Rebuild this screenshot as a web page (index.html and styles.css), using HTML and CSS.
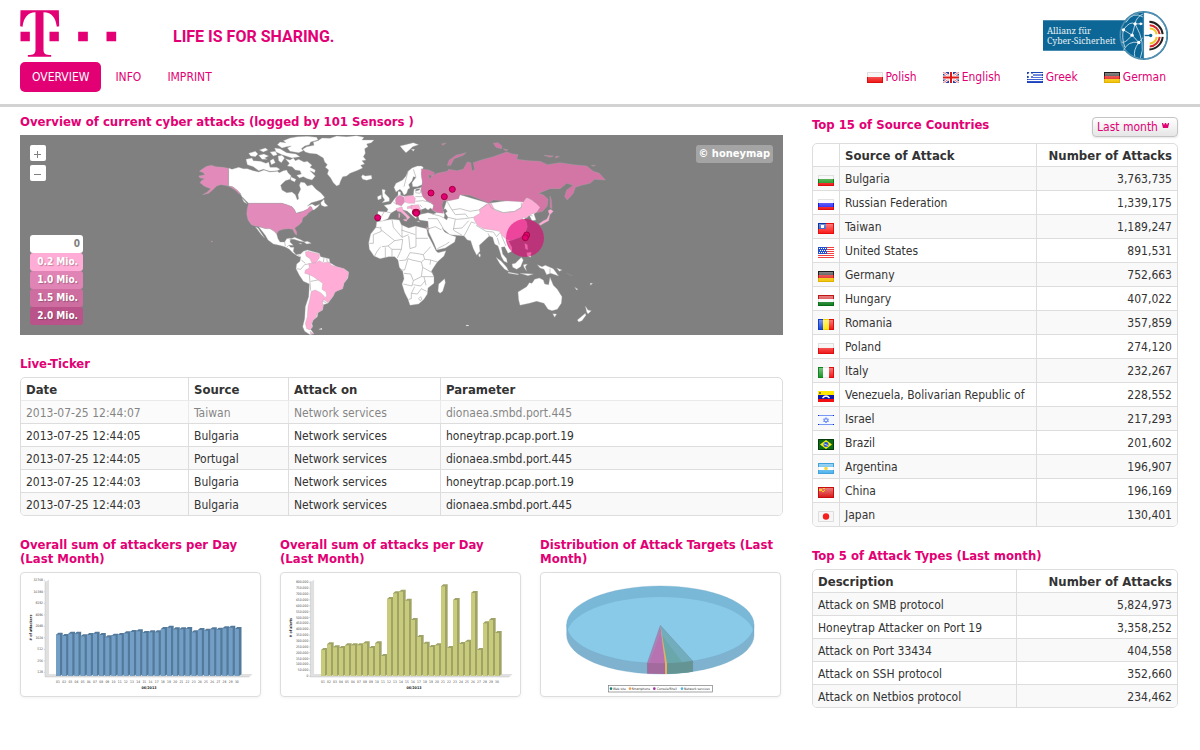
FILE: index.html
```html
<!DOCTYPE html>
<html lang="en">
<head>
<meta charset="utf-8">
<title>Overview of current cyber attacks</title>
<link rel="stylesheet" href="styles.css">
</head>
<body>
<svg class="defs" aria-hidden="true">
  <defs>
    <linearGradient id="gloss" x1="0" y1="0" x2="0" y2="1">
      <stop offset="0" stop-color="#fff" stop-opacity=".45"/><stop offset="1" stop-color="#fff" stop-opacity=".05"/>
    </linearGradient>
    <g id="shine"><rect x="1" y="1" width="14" height="9" fill="url(#gloss)"/><rect x=".5" y=".5" width="15" height="10" fill="none" stroke="#000" stroke-opacity=".08"/></g>
    <symbol id="pl" viewBox="0 0 16 11"><path fill="#f4f0f0" d="M0 0h16v6H0z"/><path fill="#f01010" d="M0 5h16v6H0z"/><use href="#shine"/></symbol>
    <symbol id="gb" viewBox="0 0 16 11"><path fill="#2a3f9c" d="M0 0h16v11H0z"/><path stroke="#fff" stroke-width="2.4" d="M0 0l16 11M16 0L0 11"/><path stroke="#e33" stroke-width=".7" d="M0 0l16 11M16 0L0 11"/><path fill="#fff" d="M6 0h4v11H6zM0 3.500h16v4H0z"/><path fill="#e01818" d="M7 0h2v11H7zM0 4.500h16v2H0z"/></symbol>
    <symbol id="gr" viewBox="0 0 16 11"><path fill="#fff" d="M0 0h16v11H0z"/><path fill="#2048c8" d="M0 0h16v1H0zM0 2h16v2H0zM0 5h16v1H0zM0 7h16v1H0zM0 9h16v2H0zM0 0h6v6H0z"/><path fill="#fff" d="M2 0h2v6H2zM0 2h6v2H0zM6 4h10v1H6z"/><use href="#shine"/></symbol>
    <symbol id="de" viewBox="0 0 16 11"><path fill="#222" d="M0 0h16v4H0z"/><path fill="#e01010" d="M0 4h16v3H0z"/><path fill="#f2c200" d="M0 7h16v4H0z"/><use href="#shine"/></symbol>
    <symbol id="bg" viewBox="0 0 16 11"><path fill="#f4f4f4" d="M0 0h16v4H0z"/><path fill="#129012" d="M0 4h16v4H0z"/><path fill="#f01010" d="M0 8h16v3H0z"/><use href="#shine"/></symbol>
    <symbol id="ru" viewBox="0 0 16 11"><path fill="#f6f6f6" d="M0 0h16v4H0z"/><path fill="#1818f0" d="M0 4h16v4H0z"/><path fill="#f01010" d="M0 8h16v3H0z"/><use href="#shine"/></symbol>
    <symbol id="tw" viewBox="0 0 16 11"><path fill="#fa1010" d="M0 0h16v11H0z"/><path fill="#1038b8" d="M0 0h8v6H0z"/><path fill="#fff" d="M3 2h3v3H3z"/><use href="#shine"/></symbol>
    <symbol id="us" viewBox="0 0 16 11"><path fill="#fff" d="M0 0h16v11H0z"/><path fill="#f04040" d="M0 0h16v1H0zM0 2h16v1H0zM0 4h16v1H0zM0 6h16v1H0zM0 8h16v1H0zM0 10h16v1H0z"/><path fill="#2450d0" d="M0 0h9v7H0z"/><path stroke="#fff" stroke-dasharray="1 1" d="M1 1.500h8M2 3.500h7M1 5.500h8"/></symbol>
    <symbol id="hu" viewBox="0 0 16 11"><path fill="#d01818" d="M0 0h16v4H0z"/><path fill="#fafafa" d="M0 4h16v3H0z"/><path fill="#087818" d="M0 7h16v4H0z"/><use href="#shine"/></symbol>
    <symbol id="ro" viewBox="0 0 16 11"><path fill="#1040d8" d="M0 0h5v11H0z"/><path fill="#ffe808" d="M5 0h6v11H5z"/><path fill="#f01010" d="M11 0h5v11h-5z"/><use href="#shine"/></symbol>
    <symbol id="it" viewBox="0 0 16 11"><path fill="#109020" d="M0 0h5v11H0z"/><path fill="#fafafa" d="M5 0h6v11H5z"/><path fill="#f01010" d="M11 0h5v11h-5z"/><use href="#shine"/></symbol>
    <symbol id="ve" viewBox="0 0 16 11"><path fill="#ffe800" d="M0 0h16v4H0z"/><path fill="#1018a8" d="M0 4h16v4H0z"/><path fill="#f01010" d="M0 8h16v3H0z"/><path fill="none" stroke="#fff" stroke-width="1.300" d="M4.500 7q3.500-4 7 0"/><path fill="#987820" d="M1 1h2v2H1z"/></symbol>
    <symbol id="il" viewBox="0 0 16 11"><path fill="#f4f8ff" d="M0 0h16v11H0z"/><path fill="#7898f4" d="M0 0h16v1H0zM0 9h16v1H0z"/><path fill="#1028c8" d="M0 0h1v1H0zM15 0h1v1h-1zM0 9h1v1H0zM15 9h1v1h-1z"/><path fill="none" stroke="#6888f4" stroke-width=".8" d="M8 2.500l2.500 4h-5zM8 8L5.500 4h5z"/></symbol>
    <symbol id="br" viewBox="0 0 16 11"><path fill="#0c6c18" d="M0 0h16v11H0z"/><path fill="#f4ee10" d="M8 1l6 4.500L8 10 2 5.500z"/><circle cx="8" cy="5.500" r="2.500" fill="#2858d0"/><path stroke="#fff" stroke-width=".7" d="M6 5l4 1.500"/><path fill="none" stroke="#063c0c" d="M.5.5h15v10H.5z"/></symbol>
    <symbol id="ar" viewBox="0 0 16 11"><path fill="#48b0ec" d="M0 0h16v11H0z"/><path fill="#fff" d="M0 4h16v3H0z"/><use href="#shine"/><circle cx="8" cy="5.500" r="1.800" fill="#f4d840"/></symbol>
    <symbol id="cn" viewBox="0 0 16 11"><path fill="#d81010" d="M0 0h16v11H0z"/><use href="#shine"/><path fill="#ffd020" d="M1 2h3v2H1zM5 1h2v1H5zM6 3h1v1H6zM4 4h2v1H4z"/></symbol>
    <symbol id="jp" viewBox="0 0 16 11"><path fill="#f6f6f6" d="M0 0h16v11H0z"/><circle cx="8" cy="5.500" r="3.200" fill="#f42020"/><path fill="none" stroke="#ddd" d="M.5.5h15v10H.5z"/></symbol>
  </defs>
</svg>

<header class="header">
  <div class="brand">
    <svg class="brand-logo" viewBox="60 31 290 141" role="img" aria-label="Telekom">
      <path fill="#e20074" d="M61 32H176L177 80L170 81C166 54 156 39 130 38V150C130 162 136 166 153 166V171H83V166C100 166 106 162 106 150V38C82 39 71 54 67 81L60 80ZM61 96H89V125H61ZM148 96H176V125H148ZM234 96H263V125H234ZM319 96H348V125H319Z"/>
    </svg>
    <span class="slogan">LIFE IS FOR SHARING.</span>
    <svg class="alliance" viewBox="669 29 376 152" role="img" aria-label="Allianz für Cyber-Sicherheit">
      <path fill="#0c6696" d="M669 59H920V151H669Z"/>
      <text class="alliance-text" x="681" y="100">Allianz für</text>
      <text class="alliance-text" x="681" y="132">Cyber-Sicherheit</text>
      <circle cx="972" cy="105" r="71" fill="#fff" stroke="#3d83a8" stroke-width="5"/>
      <path fill="#0c6696" d="M971 36A69 69 0 0 0 971 174Z"/>
      <g fill="none" stroke="#b4d4e2" stroke-width="3"><circle cx="972" cy="105" r="70" stroke="#5c97b6"/><path d="M971 50Q940 30 918 66M911 88L937 104L946 70L970 70M911 88Q930 60 946 70Q950 48 971 40M937 104L957 126L971 110M957 126Q925 120 911 150M957 126Q940 150 945 168M937 104Q915 130 906 125M946 70Q980 130 962 172M911 88Q905 110 915 140"/></g>
      <g fill="#fff"><circle cx="911" cy="88" r="5"/><circle cx="937" cy="104" r="5"/><circle cx="946" cy="70" r="5"/><circle cx="957" cy="126" r="5"/><circle cx="963" cy="70" r="4"/></g>
      <path d="M971 34V176" stroke="#3d83a8" stroke-width="4"/>
      <g fill="none" stroke-width="6"><path stroke="#222" d="M989 64A42 42 0 0 1 1029 101M1029 109A42 42 0 0 1 989 147"/><path stroke="#d4282c" d="M990 74A32 32 0 0 1 1020 101M1020 109A32 32 0 0 1 990 138"/><path stroke="#f0c828" d="M990 84A22 22 0 0 1 1011 101M1011 109A22 22 0 0 1 990 129"/></g>
      <path stroke="#0c6696" stroke-width="4" d="M975 105H995"/><circle cx="993" cy="105" r="5" fill="#0c6696"/>
    </svg>
  </div>
  <div class="bar">
    <nav class="nav">
      <a class="active" href="#overview">OVERVIEW</a>
      <a href="#info">INFO</a>
      <a href="#imprint">IMPRINT</a>
    </nav>
    <nav class="languages" aria-label="Language">
      <a href="#pl"><svg class="flag"><use href="#pl"/></svg>Polish</a>
      <a href="#en"><svg class="flag"><use href="#gb"/></svg>English</a>
      <a href="#el"><svg class="flag"><use href="#gr"/></svg>Greek</a>
      <a href="#de"><svg class="flag"><use href="#de"/></svg>German</a>
    </nav>
  </div>
</header>

<main class="content">
  <div class="main-column">
    <h2 class="title">Overview of current cyber attacks (logged by 101 Sensors )</h2>
    <section class="map">
      <svg class="map-svg" viewBox="0 0 763 200" role="img" aria-label="World map of attacks">
        <g class="land" transform="translate(170 -5) scale(.33333)">
          <path d="M116 114L126 118L146 112L160 116L172 116L190 122L206 126L222 120L240 126L262 124L268 128L280 122L290 120L294 128L304 138L300 148L286 152L272 166L276 180L290 188L306 186L316 194L322 210L326 206L324 194L332 178L328 166L332 156L344 158L352 168L366 164L378 178L392 188L404 202L398 208L380 214L364 218L352 228L366 222L376 228L390 222L384 230L372 240L362 238L352 238L340 244L330 246L318 250L314 240L306 230L290 224L276 220H176L168 212L156 200L150 190L140 180L128 170L116 168Z"/>
          <path d="M392 218L402 208L404 218L414 228L404 230L394 226ZM156 204L164 212L172 222L162 216Z"/>
          <path d="M168 88L186 84L190 92L212 94L228 100L236 96L240 112L260 112L270 118L262 122L240 124L220 118L206 122L190 110L172 104ZM176 70L196 64L204 72L196 80L182 78ZM206 76L222 72L236 78L224 84L232 88L216 88ZM208 60L226 54L234 60L220 66ZM240 66L256 64L262 74L250 78ZM264 78L276 76L284 84L274 98L266 92ZM240 92L250 86L256 98L244 104ZM254 54L270 56L290 68L318 72L330 80L306 84L276 74L258 66Z"/>
          <path d="M276 54L262 44L270 36L288 38L280 32L300 24L322 20L352 19L380 22L384 30L362 36L358 44L344 48L334 56L340 62L326 68L300 64L292 54L304 48L290 50Z"/>
          <path d="M286 86L300 90L310 84L316 92L326 88L342 96L352 94L366 106L360 112L376 120L374 128L360 122L376 138L366 150L352 146L340 140L328 144L320 136L334 132L330 122L316 120L306 110L292 108L298 100ZM302 140L318 148L314 156L302 150Z"/>
          <path d="M338 58L350 50L372 46L370 36L384 32L396 24L420 25L440 18L470 20L500 17L522 22L516 30L552 30L544 38L530 42L534 50L524 56L526 70L520 80L528 90L516 92L524 102L512 106L518 114L500 122L480 130L470 138L458 140L452 152L448 164L440 168L430 158L422 144L412 132L416 120L406 112L412 104L404 96L400 84L380 72L358 70L346 66Z"/>
          <path d="M514 140L518 134L526 138L544 136L546 146L530 151L518 148Z"/>
          <path class="us" d="M115 115L100 112L78 110L64 106L50 109L38 116L28 124L40 128L44 134L26 138L30 144L44 146L34 152L30 158L42 168L50 172L62 176L52 186L38 194L56 190L68 180L80 168L92 164L104 166L118 169L130 172L144 182L152 192L148 192L138 182L122 172L115 169ZM64 333H67V336H64Z"/>
          <path class="us" d="M176 220H276L290 224L306 230L314 240L318 250L330 248L342 242L352 238L360 228L366 232L368 240L356 248L350 256L338 264L336 276L326 286L314 294L320 306L320 316L314 310L308 298L296 296L280 298L266 302L260 312L252 304L240 296L226 296L208 290L194 288L184 284L174 270L170 252L172 234Z"/>
          <path d="M206 290L226 296L240 296L252 304L260 312L264 326L270 336L284 336L290 326L302 324L300 336L310 346L296 346L302 352L312 352L310 364L318 374L330 372L344 374L340 376L322 378L308 368L298 358L284 350L268 346L250 342L234 330L226 316ZM196 290L204 294L212 306L224 324L214 314ZM298 328L314 322L334 330L344 336L330 334L312 328ZM342 336L352 334L364 340L350 342ZM326 340L334 340L334 343ZM386 598L396 594L396 599Z"/>
          <path d="M324 380L340 364L352 360L388 370L392 380L418 386L420 398L440 410L462 416L476 426L474 444L462 460L458 476L436 484L430 498L414 520L400 524L398 540L384 548L382 560L370 570L366 580L368 590L362 598L372 611L360 614L344 604L338 590L344 566L346 530L356 500L358 462L340 454L328 436L318 416L320 402L330 394L332 380Z"/>
          <path class="low" d="M346 366L354 364L372 368L388 372L388 384L378 398L366 400L360 386L348 378Z"/>
          <path class="low" d="M344 430L346 420L358 414L356 400L366 400L378 398L388 392L400 398L418 396L424 406L442 410L462 416L476 428L472 444L462 460L458 476L436 486L428 500L414 518L400 508L410 498L408 486L396 478L398 460L384 450L370 440L358 434Z"/>
          <path class="low" d="M364 484L376 480L392 488L404 500L398 516L400 530L396 540L382 550L378 562L368 572L364 584L366 592L360 600L350 596L346 580L352 560L354 530L360 506ZM360 604L372 612H362Z"/>
          <path class="line" d="M320 416L332 418L344 404L356 402M334 390L346 400M358 434L362 482M402 384L400 396M410 386L412 396M284 336L286 348M296 346L290 352M362 454L384 450M398 512L410 520"/>
        </g>
        <g class="land" transform="translate(340 -5) scale(.33333)">
          <path d="M50 276L66 272L96 268L118 270L124 284L146 294L166 288L200 296L204 316L216 338L228 362L234 368L258 362L252 378L232 396L220 414L214 424L222 440L222 460L204 474L202 492L192 508L176 522L150 526L144 508L134 488L126 462L132 446L128 424L118 412L114 390L104 380L86 380L60 386L42 378L28 358L26 338L32 312L48 292Z"/>
          <path d="M254 446L256 458L248 484L240 490L234 484L236 462Z"/>
          <path class="line" d="M48 292L62 294M62 290L64 304L40 314V340L28 340M64 300L104 332L84 348L66 350M96 268L100 292L126 322L146 314M126 284L126 322M124 300L166 314M168 290V325H204M168 325V350L150 356L146 318M104 332L128 328L124 358H96L84 348M62 350L50 366L44 378M76 384V352M96 358V380M124 358L112 384M118 392L138 390L150 368L168 370L190 374L212 350M190 374L194 388L184 396L156 390L144 386L134 420H120M132 430L152 432L160 452L184 440L188 412L184 396M212 390L232 396M194 388L212 390L210 404M188 412L220 430M184 440L222 440M160 452L156 468L130 462M160 464L182 468L196 452M154 490L164 470M146 508L154 506V490L172 492L184 476L200 484M176 506L182 500L186 508L180 512ZM192 440L198 466"/>
          <path d="M184 108L172 108L156 114L144 124L138 138L128 150L108 160L102 172L108 186L120 178L126 184L132 196L140 190L144 178L150 174L146 164L156 152L160 140L168 142L156 158L158 170L172 170L186 164L188 148L184 130L190 112ZM120 48L136 44L160 38L176 44L158 50L148 60L138 68L128 58ZM154 58L164 58L160 64ZM66 178L76 180L74 190L88 204L88 214L66 218L74 210L68 200ZM52 200L64 194V206L54 210Z"/>
          <path d="M54 244L80 246L84 238L72 226L92 222L104 206L114 196V184L122 186L122 196L138 200L160 196L162 178L186 172L200 212L220 220L220 232L248 248L260 212L300 194L386 220L500 204L522 216L540 232L536 240L522 252L528 270L516 272L508 256L492 268L500 276L502 290L496 308L480 322L458 330L446 334L456 352L456 364L444 370L434 350L424 352L428 372L440 386L442 398L432 394L424 380L418 360L414 348L404 342L398 322L388 318L358 346L360 364L350 376L340 356L332 332L322 330L312 318L270 314L246 294L254 306L270 314L288 320L284 336L256 354L230 360L222 340L206 306L204 274L178 270L174 256L186 252L190 238L180 240L168 266L158 258L142 244L130 240L112 238L92 250L84 266L66 274L52 268ZM356 370L362 374L360 382L356 378ZM170 274L178 274V277Z"/>
          <path class="sea" d="M184 240L196 234L204 240L212 234L218 240L230 248L220 252L204 248L186 252ZM248 240L256 236L262 244L256 250L264 262L260 270L252 264L254 254ZM168 178L180 176L178 180L166 184ZM116 250L122 252L132 262L142 266L150 262L142 250L128 240Z"/>
          <path class="ger" d="M110 200L120 196L132 202L134 216L124 228L108 222L106 210Z"/>
          <path class="low" d="M134 198L158 196L166 204L164 220L146 220L134 216ZM154 226L176 224L182 240L166 244L152 236ZM142 230L156 226L154 234L142 236ZM162 246L176 244L174 252L164 252ZM108 236L126 230L130 242L150 262L142 270L138 260L122 246L112 244ZM116 250L120 252V262L116 264ZM130 268L142 268L140 274L132 272Z"/>
          <path class="low" d="M340 262L360 250L358 240L380 222L394 220L404 240L430 248L464 244L484 232L486 224L496 204L512 202L522 216L542 224L544 232L528 248L510 254L500 264L488 262L490 270L500 276V290L494 308L478 322L452 330L436 326L424 314L418 304L398 300L370 296L352 286L346 276ZM536 282L550 272L560 268L568 252L564 242L572 238L580 244L570 254L566 272L552 280L542 286ZM200 290L206 296L202 300Z"/>
          <path class="rus" d="M184 116L206 120L224 128L218 138L206 134L208 148L216 138L232 130L262 124L266 118L290 122L310 118L322 96L332 98L336 124L344 118L340 98L364 90L400 80L440 66L458 72L474 74L470 88L506 92L540 94L562 104L600 98L640 104L680 108L700 124L718 130L736 150L704 148L690 160L664 166L646 172L640 190L622 210L614 200L620 180L640 166L620 160L600 176L570 176L536 190L552 196L564 208L562 228L548 244L530 248L540 232L522 214L500 202L490 216L460 214L430 212L400 210L386 220L360 208L330 196L300 194L296 206L268 212L250 212L246 226L250 250L232 248L216 240L222 226L200 212L188 200L182 180L188 160L184 140ZM262 106L268 90L288 76L318 68L310 76L282 86L272 106ZM400 40L414 38L426 48L424 56L408 52ZM430 56L444 60L436 62ZM244 42L258 39L250 46ZM552 76L580 78L570 82ZM588 78L598 80L586 84ZM694 106L706 106L700 109ZM570 198L574 210L576 236L570 232Z"/>
          <path d="M474 486L500 470L508 458L516 460L524 448L538 444L550 450L554 462L566 464L570 442L580 466L592 478L606 500L604 520L592 538L576 542L564 538L552 520L530 514L508 520L480 526L476 510ZM578 551L590 552L584 562ZM676 528L684 540L694 542L684 552L680 546ZM676 550L678 556L666 572L656 576L652 570ZM456 402L466 400L484 382L490 390L482 410L470 418L458 412ZM408 382L424 394L440 412L446 424L434 418L420 402ZM444 426L476 432L474 434L446 430ZM490 404L502 402L496 410L500 424L492 412ZM480 430L520 432L504 437ZM532 404L546 410L556 406L580 416L596 438L572 430L560 434L552 418L540 414ZM590 414L606 420L598 424ZM620 430L638 438M644 472L654 478L650 480ZM690 460L698 460L692 466ZM318 585H326V588H318ZM494 340L502 344L504 360L496 356ZM500 368L514 366L512 382L502 378Z"/>
          <path class="line" d="M72 246L60 268M92 248L80 246M100 216L110 224M144 124L132 170M168 142L160 118M166 200L186 200M166 214L188 212L216 218M180 224L186 232M184 180L180 190L166 188M260 212L276 240L300 236L330 244L356 240L380 224M264 262L290 268L314 266L340 262M276 240L286 254L316 252L324 262M286 268L280 300L306 316M280 296L306 294L326 272M312 318L322 300L334 276L346 280M348 286L378 304L400 306M384 310L390 322M400 306L410 320L420 308M412 324L418 344M424 316L438 348M438 328L450 356M204 266L232 266L250 296M206 296L226 290L244 300M232 356L256 344L268 336M216 252L240 258L252 264M386 220L394 234L430 248L464 244L484 232L484 218M510 256L518 258M200 296L210 296M570 416V432"/>
        </g>
        <g class="hits" transform="translate(340 -5) scale(.33333)">
          <circle class="burst" cx="495" cy="324" r="57"/>
          <circle cx="53" cy="263" r="9"/><circle cx="213" cy="189" r="9"/><circle cx="253" cy="200" r="9"/><circle cx="277" cy="178" r="9"/><circle cx="166" cy="247" r="9"/><circle cx="170" cy="247" r="9"/><circle cx="169" cy="250" r="9"/><circle cx="500" cy="315" r="9"/><circle cx="496" cy="323" r="9"/>
        </g>
      </svg>
      <div class="zoom">
        <button type="button" aria-label="Zoom in"><svg viewBox="0 0 16 16"><path d="M4 9.500H11M7.500 6V13"/></svg></button>
        <button type="button" aria-label="Zoom out"><svg viewBox="0 0 16 16"><path d="M4 9.500H11"/></svg></button>
      </div>
      <ul class="scale">
        <li class="s0">0</li><li class="s1">0.2 Mio.</li><li class="s2">1.0 Mio.</li><li class="s3">1.5 Mio.</li><li class="s4">2.0 Mio.</li>
      </ul>
      <a class="credit" href="#honeymap">© honeymap</a>
    </section>

    <h2 class="title">Live-Ticker</h2>
    <table class="grid ticker">
      <colgroup><col class="c-date"><col class="c-source"><col class="c-attack"><col></colgroup>
      <thead><tr><th>Date</th><th>Source</th><th>Attack on</th><th>Parameter</th></tr></thead>
      <tbody>
        <tr class="fading"><td>2013-07-25 12:44:07</td><td>Taiwan</td><td>Network services</td><td>dionaea.smbd.port.445</td></tr>
        <tr><td>2013-07-25 12:44:05</td><td>Bulgaria</td><td>Network services</td><td>honeytrap.pcap.port.19</td></tr>
        <tr><td>2013-07-25 12:44:05</td><td>Portugal</td><td>Network services</td><td>dionaea.smbd.port.445</td></tr>
        <tr><td>2013-07-25 12:44:03</td><td>Bulgaria</td><td>Network services</td><td>honeytrap.pcap.port.19</td></tr>
        <tr><td>2013-07-25 12:44:03</td><td>Bulgaria</td><td>Network services</td><td>dionaea.smbd.port.445</td></tr>
      </tbody>
    </table>

    <div class="charts">
      <section>
        <h2 class="title">Overall sum of attackers per Day (Last&nbsp;Month)</h2>
        <div class="card"><svg id="attackers" class="chart" viewBox="33 129 717 369" role="img" aria-label="Attackers per day"></svg></div>
      </section>
      <section>
        <h2 class="title">Overall sum of attacks per Day (Last&nbsp;Month)</h2>
        <div class="card"><svg id="attacks" class="chart" viewBox="33 129 717 369" role="img" aria-label="Attacks per day"></svg></div>
      </section>
      <section>
        <h2 class="title">Distribution of Attack Targets (Last Month)</h2>
        <div class="card">
          <svg class="chart" viewBox="33 129 717 369" role="img" aria-label="Attack targets">
            <clipPath id="top"><ellipse cx="391" cy="284" rx="281" ry="116"/></clipPath>
            <path fill="#7eb2cf" d="M110 284V316A281 116 0 0 0 672 316V284Z"/>
            <ellipse cx="391" cy="284" rx="281" ry="116" fill="#7ab8d8"/>
            <ellipse cx="391" cy="317" rx="281" ry="116" fill="#8acae9" clip-path="url(#top)"/>
            <path fill="none" stroke="#70a8c6" d="M110 284V316A281 116 0 0 0 672 316V284A281 116 0 0 0 110 284A281 116 0 0 0 672 284"/>
            <path fill="#72adbd" d="M391 286L488 393V425L411 432Z"/>
            <path fill="#6aa7aa" d="M391 310L480 427L411 432L402 395Z"/>
            <path fill="#659494" d="M409 400Q450 399 488 392V425Q450 431 411 432Z"/>
            <path fill="#a983b8" d="M391 286L352 399V431L406 432L408 400Z"/>
            <path fill="#b773b1" d="M391 310L358 400H406Z"/>
            <path fill="#a26a9d" d="M352 399L406 400V432L352 430Z"/>
            <path fill="#e4b15f" d="M391 286L405 400V432H411V400Z"/>
            <path fill="none" stroke="#6d7f92" d="M391 286L352 399V430M391 286L488 393V425"/>
            <rect x="235" y="466" width="312" height="20" fill="#fff" stroke="#777" stroke-width="2"/>
            <g class="legend">
              <circle cx="243" cy="476" r="4" fill="#178080"/><text x="249" y="479">Web site</text>
              <circle cx="300" cy="476" r="4" fill="#f0a050"/><text x="305" y="479">Smartphone</text>
              <circle cx="373" cy="476" r="4" fill="#a030a0"/><text x="380" y="479">Console/Shell</text>
              <circle cx="456" cy="476" r="4" fill="#50b4e4"/><text x="462" y="479">Network services</text>
            </g>
          </svg>
        </div>
      </section>
    </div>
  </div>

  <aside class="side-column">
    <div class="side-head">
      <h2 class="title">Top 15 of Source Countries</h2>
      <button type="button" class="period">Last month <svg viewBox="0 0 7 5"><path d="M0 0H1L2 2L3 0H4L5 2L6 0H7V1L6 5H1L0 1Z"/></svg></button>
    </div>
    <table class="grid countries">
      <colgroup><col class="c-flag"><col><col class="c-count"></colgroup>
      <thead><tr><th aria-label="Flag"></th><th>Source of Attack</th><th class="num">Number of Attacks</th></tr></thead>
      <tbody>
        <tr><td><svg class="flag"><use href="#bg"/></svg></td><td>Bulgaria</td><td class="num">3,763,735</td></tr>
        <tr><td><svg class="flag"><use href="#ru"/></svg></td><td>Russian Federation</td><td class="num">1,339,175</td></tr>
        <tr><td><svg class="flag"><use href="#tw"/></svg></td><td>Taiwan</td><td class="num">1,189,247</td></tr>
        <tr><td><svg class="flag"><use href="#us"/></svg></td><td>United States</td><td class="num">891,531</td></tr>
        <tr><td><svg class="flag"><use href="#de"/></svg></td><td>Germany</td><td class="num">752,663</td></tr>
        <tr><td><svg class="flag"><use href="#hu"/></svg></td><td>Hungary</td><td class="num">407,022</td></tr>
        <tr><td><svg class="flag"><use href="#ro"/></svg></td><td>Romania</td><td class="num">357,859</td></tr>
        <tr><td><svg class="flag"><use href="#pl"/></svg></td><td>Poland</td><td class="num">274,120</td></tr>
        <tr><td><svg class="flag"><use href="#it"/></svg></td><td>Italy</td><td class="num">232,267</td></tr>
        <tr><td><svg class="flag"><use href="#ve"/></svg></td><td>Venezuela, Bolivarian Republic of</td><td class="num">228,552</td></tr>
        <tr><td><svg class="flag"><use href="#il"/></svg></td><td>Israel</td><td class="num">217,293</td></tr>
        <tr><td><svg class="flag"><use href="#br"/></svg></td><td>Brazil</td><td class="num">201,602</td></tr>
        <tr><td><svg class="flag"><use href="#ar"/></svg></td><td>Argentina</td><td class="num">196,907</td></tr>
        <tr><td><svg class="flag"><use href="#cn"/></svg></td><td>China</td><td class="num">196,169</td></tr>
        <tr><td><svg class="flag"><use href="#jp"/></svg></td><td>Japan</td><td class="num">130,401</td></tr>
      </tbody>
    </table>
    <h2 class="title">Top 5 of Attack Types (Last month)</h2>
    <table class="grid types">
      <colgroup><col><col class="c-total"></colgroup>
      <thead><tr><th>Description</th><th class="num">Number of Attacks</th></tr></thead>
      <tbody>
        <tr><td>Attack on SMB protocol</td><td class="num">5,824,973</td></tr>
        <tr><td>Honeytrap Attacker on Port 19</td><td class="num">3,358,252</td></tr>
        <tr><td>Attack on Port 33434</td><td class="num">404,558</td></tr>
        <tr><td>Attack on SSH protocol</td><td class="num">352,660</td></tr>
        <tr><td>Attack on Netbios protocol</td><td class="num">234,462</td></tr>
      </tbody>
    </table>
  </aside>
</main>
<script src="charts.js"></script>
</body>
</html>
```
FILE: styles.css
```css
* { box-sizing: border-box; }
body {
  margin: 0;
  background: #fff;
  color: #333;
  font: 12px/16px "DejaVu Sans Condensed", "DejaVu Sans", sans-serif;
  font-stretch: condensed;
}
a { color: #e20074; text-decoration: none; }
button { font: inherit; cursor: pointer; }
.defs { display: block; width: 0; height: 0; }
.title { margin: 0; color: #e20074; font-size: 13px; line-height: 14px; font-weight: bold; }
.flag { flex: none; width: 16px; height: 11px; }

.header { border-bottom: 3px solid #d2d2d2; padding: 10px 22px 12px 20px; }
.brand { display: flex; align-items: flex-start; height: 52px; }
.brand-logo { width: 97px; height: 47px; }
.slogan { margin: 16px 0 0 56px; color: #e20074; font: bold 16px/22px Roboto, sans-serif; }
.alliance { width: 125px; height: 51px; margin: 0 10px 0 auto; }
.alliance-text { fill: #e4f0f4; font: 26px "Noto Serif", "Liberation Serif", serif; }
.bar { display: flex; justify-content: space-between; align-items: center; }
.nav { display: flex; gap: 2px; }
.nav a { padding: 7px 12px; border-radius: 5px; }
.nav .active { background: #e20074; color: #fff; }
.languages { display: flex; gap: 26px; padding-right: 12px; }
.languages a { display: flex; align-items: center; gap: 3px; }

.content {
  display: grid;
  grid-template-columns: minmax(0, 763fr) minmax(0, 366fr);
  gap: 29px;
  padding: 8px 22px 20px 20px;
}

.map { position: relative; height: 200px; margin: 6px 0 22px; background: #808080; overflow: hidden; }
.map-svg { display: block; width: 100%; height: 100%; }
.land path { fill: #fff; stroke: #aaa; stroke-width: 1; }
.land .sea { fill: #808080; }
.land .us, .land .ger { fill: #e28ab9; }
.land .low { fill: #ffacd6; }
.land .rus { fill: #d375a5; }
.land .line { fill: none; stroke: #aaa; stroke-width: 2; }
.hits circle { fill: #e20074; stroke: #a0003c; stroke-width: 3; }
.hits .burst { fill-opacity: .6; stroke: none; }
.zoom { position: absolute; top: 10px; left: 10px; display: grid; gap: 4px; }
.zoom button { display: block; width: 16px; height: 16px; padding: 0; border: 0; border-radius: 2px; background: #fff; }
.zoom svg { display: block; width: 16px; height: 16px; fill: none; stroke: #808080; }
.scale { position: absolute; left: 10px; bottom: 10px; width: 53px; margin: 0; padding: 0; list-style: none; }
.scale li {
  height: 18px;
  padding-right: 5px;
  border-radius: 3px;
  color: #fff;
  font-size: 10px;
  font-weight: bold;
  line-height: 17px;
  text-align: right;
  text-shadow: 1px 1px 1px rgba(0, 0, 0, .25);
}
.scale .s0 { padding-right: 3px; background: #fff; color: #808080; text-shadow: none; }
.scale .s1 { background: #ffacd6; }
.scale .s2 { background: #e083b5; }
.scale .s3 { background: #cd6da0; }
.scale .s4 { background: #b95389; }
.credit {
  position: absolute;
  top: 10px;
  right: 10px;
  padding: 1px 3px;
  border-radius: 3px;
  background: #a4a4a4;
  color: #fff;
  font-size: 11px;
  font-weight: bold;
}

.grid {
  width: 100%;
  table-layout: fixed;
  border: 1px solid #ddd;
  border-radius: 5px;
  border-spacing: 0;
  overflow: hidden;
}
.grid th, .grid td { height: 23px; padding: 1px 5px 0; line-height: 16px; text-align: left; white-space: nowrap; }
.grid th { height: 22px; font-size: 13px; }
.grid td { border-top: 1px solid #ddd; }
.grid th + th, .grid td + td { border-left: 1px solid #ddd; }
.grid tbody tr:nth-child(odd) { background: #f9f9f9; }
.grid .num { text-align: right; }
.ticker { margin: 6px 0 22px; }
.fading { opacity: .6; }
.c-date { width: 167px; }
.c-source { width: 100px; }
.c-attack { width: 152px; }
.c-flag { width: 26px; }
.c-count { width: 141px; }
.c-total { width: 161px; }
.countries { margin-bottom: 22px; }
.countries td { height: 24px; padding-top: 0; }
.countries .flag { display: block; margin-top: 3px; }
.types { margin-top: 6px; }

.side-head { display: flex; justify-content: space-between; align-items: flex-start; margin: 2px 0 6px; }
.side-head .title { margin-top: 1px; }
.period {
  display: flex;
  gap: 4px;
  width: 86px;
  height: 20px;
  padding: 1px 4px;
  border: 1px solid #c4c4c4;
  border-radius: 4px;
  background: linear-gradient(#fff, #e6e6e6);
  box-shadow: 0 1px 2px rgba(0, 0, 0, .1);
  color: #e20074;
  white-space: nowrap;
}
.period svg { width: 7px; height: 5px; margin-top: 4px; fill: #e20074; }

.charts { display: grid; grid-template-columns: repeat(3, minmax(0, 1fr)); gap: 19px; padding-right: 2px; }
.card { margin-top: 6px; border: 1px solid #ddd; border-radius: 4px; box-shadow: 0 1px 3px rgba(0, 0, 0, .06); }
.chart { display: block; width: 100%; height: auto; }
.chart text { font-size: 10px; fill: #444; }
.chart .axis-title { font-size: 11px; font-weight: bold; fill: #222; }
.chart .legend text { font-size: 10px; fill: #333; }
```
FILE: charts.js
```javascript
const NS = "http://www.w3.org/2000/svg";

function add(parent, name, attributes, text) {
  const node = document.createElementNS(NS, name);
  for (const key in attributes) node.setAttribute(key, attributes[key]);
  if (text !== undefined) node.textContent = text;
  parent.appendChild(node);
  return node;
}

function drawBars(id, o) {
  const svg = document.getElementById(id);
  const base = 438;
  add(svg, "path", { fill: "#e0e0e0", d: `M${o.axis} 156L${o.axis + 12} 149V432H728L718 441H${o.axis}Z` });
  add(svg, "path", { fill: "#fff", d: `M${o.axis + 12} 149V432H728V149Z` });
  add(svg, "path", { fill: "none", stroke: "#aaa", d: `M${o.axis} 152V441H718` });
  o.labels.forEach((label, i) => {
    const y = o.firstLabel + i * o.labelStep;
    add(svg, "text", { x: o.axis - 6, y: y + 3, "text-anchor": "end" }, label);
    add(svg, "path", { stroke: "#999", d: `M${o.axis - 4} ${y}H${o.axis}` });
  });
  o.tops.forEach((top, i) => {
    const x = o.start + i * o.step;
    const w = 12;
    add(svg, "path", { fill: o.side, d: `M${x} ${top}L${x + 7} ${top - 6}H${x + w + 8}V${base - 5}L${x + w} ${base}H${x}Z` });
    add(svg, "rect", { x: x, y: top, width: w, height: base - top, fill: o.front });
    add(svg, "text", { x: x + 6, y: 458, "text-anchor": "middle" }, String(i + 1).padStart(2, "0"));
  });
  add(svg, "text", { class: "axis-title", x: o.start + 279, y: 478, "text-anchor": "middle" }, "06/2013");
  add(svg, "text", { class: "axis-title", transform: "translate(65 293) rotate(-90)", "text-anchor": "middle" }, o.title);
}

drawBars("attackers", {
  axis: 105, start: 138, step: 18.5, front: "#739ec6", side: "#53799b", title: "# of attackers",
  labels: ["32768", "16384", "8192", "4096", "2048", "1024", "512", "256", "128"], firstLabel: 151, labelStep: 34.5,
  tops: [314, 318, 311, 311, 319, 315, 311, 315, 322, 317, 315, 310, 306, 304, 309, 307, 307, 297, 293, 298, 298, 297, 307, 300, 302, 298, 299, 295, 293, 297]
});
drawBars("attacks", {
  axis: 121, start: 153, step: 18, front: "#c8cb7c", side: "#a0a366", title: "# of alerts",
  labels: ["800.000", "750.000", "700.000", "650.000", "600.000", "550.000", "500.000", "450.000", "400.000", "350.000", "300.000", "250.000", "200.000", "150.000", "100.000", "50.000", "0"], firstLabel: 157, labelStep: 17.6,
  tops: [360, 343, 352, 354, 346, 346, 346, 340, 354, 340, 378, 207, 190, 185, 212, 270, 321, 341, 351, 346, 169, 354, 210, 342, 335, 189, 360, 280, 270, 309]
});
```
